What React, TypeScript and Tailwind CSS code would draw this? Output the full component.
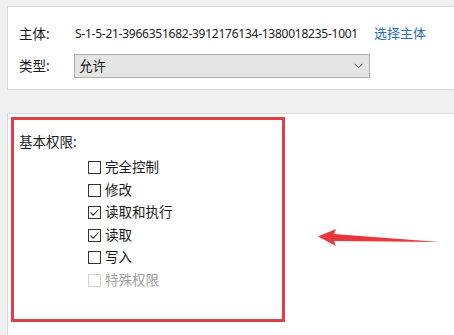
const font = "font-['Segoe_UI','Noto_Sans','Noto_Sans_CJK_SC',sans-serif]";

type Perm = { label: string; checked?: boolean; disabled?: boolean };

const perms: Perm[] = [
  { label: "完全控制" },
  { label: "修改" },
  { label: "读取和执行", checked: true },
  { label: "读取", checked: true },
  { label: "写入" },
  { label: "特殊权限", disabled: true },
];

function Box({ checked, disabled }: { checked?: boolean; disabled?: boolean }) {
  return (
    <span
      className={`flex h-[13px] w-[13px] shrink-0 items-center justify-center border bg-white ${
        disabled ? "border-[#d0d0d0]" : "border-[#333333]"
      }`}
    >
      {checked && (
        <svg width="11" height="11" viewBox="0 0 11 11">
          <path d="M1.5 5.5 L4.2 8.2 L9.5 2.5" fill="none" stroke="#333" strokeWidth="1.1" />
        </svg>
      )}
    </span>
  );
}

export default function App() {
  return (
    <div className={`relative h-[335px] w-[454px] overflow-hidden bg-[#f0f0f0] text-[13.5px] text-[#1a1a1a] ${font}`}>
      {/* Principal / type */}
      <div className="ml-[7px] mt-[6px] mr-[-20px] h-[84px] border border-[#dadada] bg-white pl-[11px] pt-[16px]">
        <div className="flex h-[22px] items-center">
          <span className="w-[56px]">主体:</span>
          <span className="text-[12px] tracking-[-0.25px]">S-1-5-21-3966351682-3912176134-1380018235-1001</span>
          <span className="ml-[16px] text-[13px] text-[#2b6cb8]">选择主体</span>
        </div>
        <div className="mt-[9px] flex items-center">
          <span className="w-[55px]">类型:</span>
          <div className="flex h-[24px] w-[296px] items-center justify-between border border-[#adadad] bg-[#e5e5e5] pl-[4px] pr-[6px]">
            <span>允许</span>
            <svg width="9" height="6" viewBox="0 0 9 6">
              <path d="M0.5 0.8 L4.5 4.8 L8.5 0.8" fill="none" stroke="#555" strokeWidth="1" />
            </svg>
          </div>
        </div>
      </div>

      {/* Basic permissions */}
      <div className="ml-[7px] mt-[23px] mr-[-20px] h-[260px] border border-[#dadada] bg-white pl-[3px] pt-[3px]">
        <div className="h-[205px] w-[274px] border-[3px] border-[#df3f47] pl-[5px] pt-[12px]">
          <div>基本权限:</div>
          <div className="ml-[69px] mt-[4px] flex flex-col">
            {perms.map((p) => (
              <div key={p.label} className="flex h-[22.5px] items-center gap-[4px]">
                <Box checked={p.checked} disabled={p.disabled} />
                <span className={p.disabled ? "text-[#a0a0a0]" : ""}>{p.label}</span>
              </div>
            ))}
          </div>
        </div>
      </div>

      {/* Annotation arrow */}
      <svg className="absolute left-[316px] top-[226px]" width="128" height="22" viewBox="0 0 128 22">
        <path d="M2 10.5 L20 3 L18 8 L124 16 L18 15 L20 20 Z" fill="#e8383d" />
      </svg>
    </div>
  );
}
